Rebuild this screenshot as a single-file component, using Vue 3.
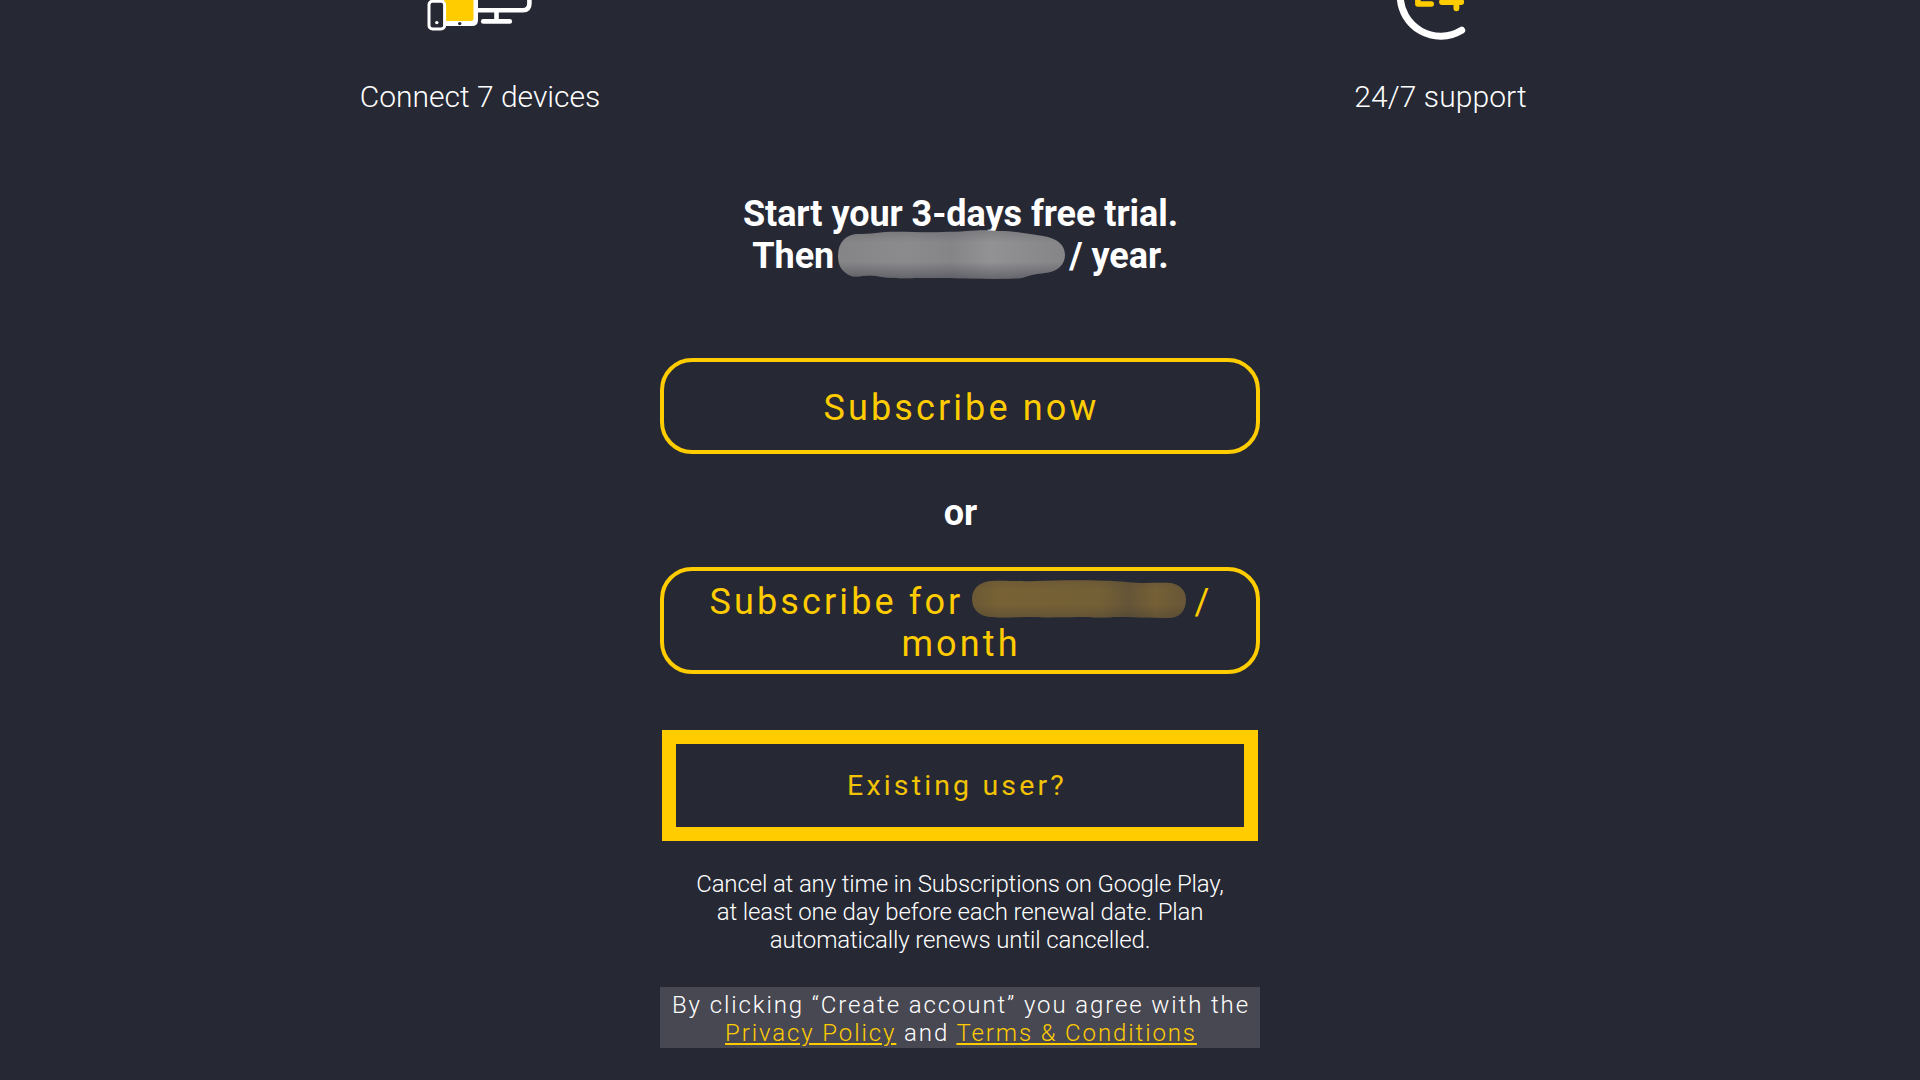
<template>
  <div class="page">
    <div class="features">
      <div class="feature">
        <svg class="feature-icon" width="120" height="44" viewBox="0 0 120 44">
          <path d="M109.4 -6 V3.5 Q109.4 10.3 102.9 10.3 H50" fill="none" stroke="#fff" stroke-width="4.6" />
          <path d="M76.5 12 V20" stroke="#fff" stroke-width="4.6" />
          <path d="M63.3 21.4 H89.7" stroke="#fff" stroke-width="4.8" stroke-linecap="round" />
          <path d="M20 -6 H58 V20 Q58 26 52 26 H20 Z" fill="#fff" />
          <path d="M24 -6 H53.5 V19 Q53.5 21 51.5 21 H24 Z" fill="#ffcc00" />
          <circle cx="39.7" cy="23.6" r="1.7" fill="#262834" />
          <rect x="9" y="1.2" width="15.6" height="27.8" rx="3.5" fill="#262834" stroke="#fff" stroke-width="3" />
          <circle cx="16.8" cy="22.6" r="1.7" fill="#fff" />
        </svg>
        <p class="feature-label">Connect 7 devices</p>
      </div>
      <div class="feature">
        <svg class="feature-icon" width="120" height="44" viewBox="0 0 120 44">
          <path d="M20.2 -4.3 A40.5 40.5 0 0 0 81.7 30.3" fill="none" stroke="#fff" stroke-width="7" stroke-linecap="round" />
          <path d="M37.9 -8 V4 H51.2" fill="none" stroke="#ffcc00" stroke-width="5.6" stroke-linecap="round" stroke-linejoin="round" />
          <path d="M62 2 H81.2 M76.4 -8 V8.3" fill="none" stroke="#ffcc00" stroke-width="5.8" stroke-linecap="round" />
        </svg>
        <p class="feature-label support">24/7 support</p>
      </div>
    </div>

    <div class="content">
      <p class="trial">
        Start your 3-days free trial.<br />
        <span class="trial-price">Then<span class="smudge-gap wide">
          <svg class="smudge" width="228" height="50" viewBox="0 0 228 50">
            <defs>
              <linearGradient id="gray" x1="0" x2="1" y1="0" y2="0">
                <stop offset="0" stop-color="#858587" />
                <stop offset=".3" stop-color="#8b8b8d" />
                <stop offset=".5" stop-color="#858588" />
                <stop offset=".67" stop-color="#929294" />
                <stop offset="1" stop-color="#858588" />
              </linearGradient>
              <linearGradient id="shade" x1="0" x2="0" y1="0" y2="1">
                <stop offset="0" stop-color="#262834" stop-opacity=".18" />
                <stop offset=".25" stop-color="#262834" stop-opacity="0" />
                <stop offset=".65" stop-color="#262834" stop-opacity="0" />
                <stop offset="1" stop-color="#262834" stop-opacity=".4" />
              </linearGradient>
            </defs>
            <path :d="priceShape" fill="url(#gray)" />
            <path :d="priceShape" fill="url(#shade)" />
          </svg>
        </span>/ year.</span>
      </p>

      <button class="subscribe yearly">Subscribe now</button>

      <p class="or">or</p>

      <button class="subscribe monthly">
        <span class="month-price">Subscribe for<span class="smudge-gap narrow">
          <svg class="smudge" width="216" height="40" viewBox="0 0 216 40">
            <defs>
              <linearGradient id="gold" x1="0" x2="1" y1="0" y2="0">
                <stop offset="0" stop-color="#6b5935" />
                <stop offset=".12" stop-color="#776135" />
                <stop offset=".6" stop-color="#746036" />
                <stop offset=".73" stop-color="#655537" />
                <stop offset=".86" stop-color="#756036" />
                <stop offset="1" stop-color="#675637" />
              </linearGradient>
            </defs>
            <path :d="monthShape" fill="url(#gold)" />
            <path :d="monthShape" fill="url(#shade)" opacity=".6" />
          </svg>
        </span>/</span>
        <span>month</span>
      </button>

      <button class="existing">Existing user?</button>

      <p class="cancel">
        Cancel at any time in Subscriptions on Google Play,<br />
        at least one day before each renewal date. Plan<br />
        automatically renews until cancelled.
      </p>

      <p class="agreement">
        By clicking “Create account” you agree with the<br />
        <a href="#" @click.prevent>Privacy Policy</a> and <a href="#" @click.prevent>Terms &amp; Conditions</a>
      </p>
    </div>
  </div>
</template>

<script setup>
// outlines of the smudges that cover the prices
const priceShape = 'M0 26 C0 12 8 5 18 4 Q30 4 38 3 C55 0 78 3 105 2 C130 2 142 -1 160 1 C178 1 192 4 205 6 C219 8 227 15 227 25 C227 34 220 42 207 43 Q194 44 184 48 C160 50 125 48 98 48 C65 48 52 49 38 46 C28 44 20 48 13 46 C4 42 0 36 0 26 Z';
const monthShape = 'M0 19 C0 8 8 2 19 1 C35 0 45 2 65 1 C95 0 130 0 155 2 C172 4 185 2 199 3 C209 5 214 11 214 20 C214 31 207 38 197 38 C180 38 160 37 142 37 Q130 38 116 37 C95 37 75 38 62 37 C45 37 28 38 18 37 C7 36 0 29 0 19 Z';
</script>

<style>
html,
body {
  margin: 0;
  background-color: #262834;
  overflow: hidden;
}
</style>

<style scoped>
.page {
  width: 1920px;
  height: 1080px;
  overflow: hidden;
  background-color: #262834;
  color: white;
  font-family: Roboto, "Liberation Sans", sans-serif;
}

p {
  margin: 0;
}

.features {
  display: grid;
  grid-template-columns: 1fr 1fr;
}

.feature {
  display: flex;
  flex-direction: column;
  align-items: center;
}

.feature-icon {
  display: block;
}

.feature-label {
  margin-top: 35px;
  font-size: 30px;
  line-height: 35px;
  font-weight: 300;
}

.support {
  padding-left: 1px;
  letter-spacing: 0.08px;
}

.content {
  display: flex;
  flex-direction: column;
  align-items: center;
  width: 600px;
  margin: 79px auto 0;
  text-align: center;
}

.trial,
.or {
  padding-left: 1px;
  font-size: 36px;
  line-height: 42px;
  font-weight: 700;
  letter-spacing: -0.05px;
}

.trial {
  white-space: nowrap;
}

.trial-price,
.month-price {
  display: flex;
  justify-content: center;
}

.smudge-gap {
  position: relative;
}

.smudge-gap.wide {
  width: 235px;
}

.smudge-gap.narrow {
  width: 231px;
}

.smudge {
  position: absolute;
  left: 4px;
  top: -5px;
}

.narrow .smudge {
  left: 9px;
  top: -1px;
}

button {
  box-sizing: border-box;
  width: 600px;
  padding: 0;
  background: none;
  color: #ffcc00;
  font-family: inherit;
  cursor: pointer;
}

.subscribe {
  border: 4px solid #ffcc00;
  border-radius: 32px;
  font-size: 36px;
  line-height: 42px;
  letter-spacing: 3.12px;
}

.yearly {
  height: 96px;
  margin-top: 81px;
  padding: 4px 0 0 3px;
}

.or {
  margin-top: 38px;
}

.monthly {
  height: 107px;
  margin-top: 33px;
  padding: 5px 0 0 2px;
}

.existing {
  width: 596px;
  height: 111px;
  margin-top: 56px;
  padding: 0 6px 0 0;
  border: 14px solid #ffcc00;
  color: #f2c304;
  font-size: 28.5px;
  line-height: 33px;
  letter-spacing: 3.15px;
}

.cancel {
  margin-top: 29px;
  font-size: 24px;
  line-height: 28px;
  font-weight: 300;
  letter-spacing: -0.14px;
}

.agreement {
  box-sizing: border-box;
  width: 600px;
  height: 61px;
  margin-top: 33px;
  padding: 4px 0 0 2px;
  background-color: #484852;
  font-size: 24px;
  line-height: 28px;
  font-weight: 300;
  letter-spacing: 1.89px;
  white-space: nowrap;
}

.agreement a {
  color: #ffcc00;
  text-decoration: underline;
}
</style>
